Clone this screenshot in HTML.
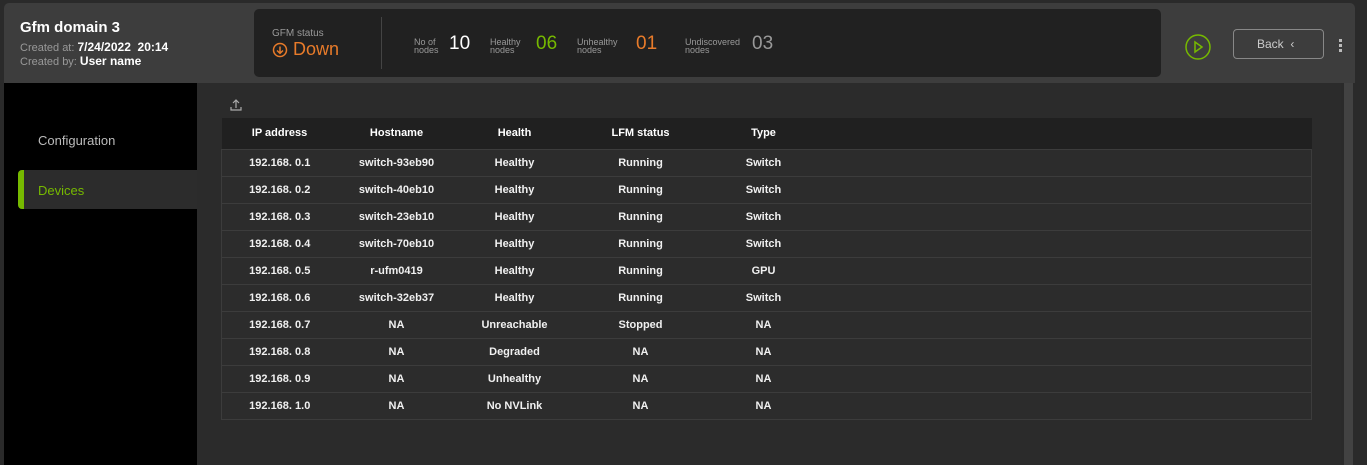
<!DOCTYPE html>
<html><head><style>
*{margin:0;padding:0;box-sizing:border-box}
body{width:1367px;height:465px;background:#2a2a2a;font-family:"Liberation Sans",sans-serif;position:relative;overflow:hidden;color:#fff}
.hdr{position:absolute;left:4px;top:3px;width:1351px;height:80px;background:#3d3d3d;border-radius:5px 5px 0 0}
.t1{position:absolute;left:16px;top:16px;font-size:15px;font-weight:bold;color:#fff}
.t2{position:absolute;left:16px;top:37px;font-size:11px;color:#999}
.t2 b{color:#fff;font-size:12px}
.t3{position:absolute;left:16px;top:51px;font-size:11px;color:#999}
.t3 b{color:#fff;font-size:12px}
.stats{position:absolute;left:254px;top:9px;width:907px;height:68px;background:#212121;border-radius:5px}
.sm{position:absolute;font-size:9px;color:#999;line-height:8px}
.big{position:absolute;font-size:19px}
.side{position:absolute;left:4px;top:83px;width:193px;height:382px;background:#000}
.content{position:absolute;left:197px;top:83px;width:1144px;height:382px;background:#2b2b2b}
.scroll{position:absolute;left:1344px;top:83px;width:9px;height:382px;background:#424242}
table{position:absolute;left:221px;top:118px;width:1091px;border-collapse:collapse;font-size:11px;font-weight:bold}
th{background:#202020;height:31px;font-weight:bold;color:#fff}
td{height:27px;border:1px solid #3c3c3c;border-left:1px solid #3c3c3c;color:#f0f0f0;background:#2c2c2c}
tr td{border-left:none;border-right:none}
tr td:first-child{border-left:1px solid #3c3c3c}
tr td:last-child{border-right:1px solid #3c3c3c}
th,td{text-align:center;padding:0}
</style></head><body>
<div class="hdr">
 <div class="t1">Gfm domain 3</div>
 <div class="t2">Created at: <b>7/24/2022&nbsp; 20:14</b></div>
 <div class="t3">Created by: <b>User name</b></div>
 <svg style="position:absolute;left:1180px;top:29px" width="28" height="30"><circle cx="14" cy="15" r="12" fill="none" stroke="#76b900" stroke-width="1.5"/><path d="M11 10 L18 15 L11 20 Z" fill="none" stroke="#76b900" stroke-width="1.5"/></svg>
 <div style="position:absolute;left:1229px;top:26px;width:91px;height:30px;border:1px solid #888;border-radius:4px;color:#ccc;font-size:12px;line-height:28px;padding-left:23px">Back &nbsp;‹</div>
 <div style="position:absolute;left:1335px;top:36px;width:3px;height:3px;background:#bbb;box-shadow:0 5px #bbb,0 10px #bbb"></div>
</div>
<div class="stats">
 <div class="sm" style="left:18px;top:21px;font-size:10px">GFM status</div>
 <svg style="position:absolute;left:18px;top:33px" width="16" height="16"><circle cx="8" cy="8" r="6.5" fill="none" stroke="#e87b2a" stroke-width="1.5"/><path d="M8 4.5V11M5 8.5L8 11.3 11 8.5" fill="none" stroke="#e87b2a" stroke-width="1.5"/></svg>
 <div class="big" style="left:39px;top:30px;color:#e87b2a;font-size:18px">Down</div>
 <div style="position:absolute;left:127px;top:8px;width:1px;height:52px;background:#444"></div>
 <div class="sm" style="left:160px;top:29px">No of<br>nodes</div><div class="big" style="left:195px;top:24px;color:#fff">10</div>
 <div class="sm" style="left:236px;top:29px">Healthy<br>nodes</div><div class="big" style="left:282px;top:24px;color:#76b900">06</div>
 <div class="sm" style="left:323px;top:29px">Unhealthy<br>nodes</div><div class="big" style="left:382px;top:24px;color:#e87b2a">01</div>
 <div class="sm" style="left:431px;top:29px">Undiscovered<br>nodes</div><div class="big" style="left:498px;top:24px;color:#999">03</div>
</div>
<div class="side">
 <div style="position:absolute;left:34px;top:50px;font-size:13px;color:#bbb">Configuration</div>
 <div style="position:absolute;left:14px;top:87px;width:179px;height:39px;background:#2c2c2c;border-left:6px solid #76b900;border-radius:4px 0 0 4px"></div>
 <div style="position:absolute;left:34px;top:100px;font-size:13px;color:#76b900">Devices</div>
</div>
<div class="content">
 <svg style="position:absolute;left:32px;top:15px" width="14" height="14"><path d="M7 10V2M4 5L7 2 10 5M2 9V12H12V9" fill="none" stroke="#aaa" stroke-width="1.2"/></svg>
</div>
<div class="scroll"></div>
<table>
<tr><th style="width:116px">IP address</th><th style="width:118px">Hostname</th><th style="width:118px">Health</th><th style="width:134px">LFM status</th><th style="width:112px">Type</th><th></th></tr>
<tr><td>192.168. 0.1</td><td>switch-93eb90</td><td>Healthy</td><td>Running</td><td>Switch</td><td></td></tr>
<tr><td>192.168. 0.2</td><td>switch-40eb10</td><td>Healthy</td><td>Running</td><td>Switch</td><td></td></tr>
<tr><td>192.168. 0.3</td><td>switch-23eb10</td><td>Healthy</td><td>Running</td><td>Switch</td><td></td></tr>
<tr><td>192.168. 0.4</td><td>switch-70eb10</td><td>Healthy</td><td>Running</td><td>Switch</td><td></td></tr>
<tr><td>192.168. 0.5</td><td>r-ufm0419</td><td>Healthy</td><td>Running</td><td>GPU</td><td></td></tr>
<tr><td>192.168. 0.6</td><td>switch-32eb37</td><td>Healthy</td><td>Running</td><td>Switch</td><td></td></tr>
<tr><td>192.168. 0.7</td><td>NA</td><td>Unreachable</td><td>Stopped</td><td>NA</td><td></td></tr>
<tr><td>192.168. 0.8</td><td>NA</td><td>Degraded</td><td>NA</td><td>NA</td><td></td></tr>
<tr><td>192.168. 0.9</td><td>NA</td><td>Unhealthy</td><td>NA</td><td>NA</td><td></td></tr>
<tr><td>192.168. 1.0</td><td>NA</td><td>No NVLink</td><td>NA</td><td>NA</td><td></td></tr>
</table>
</body></html>
